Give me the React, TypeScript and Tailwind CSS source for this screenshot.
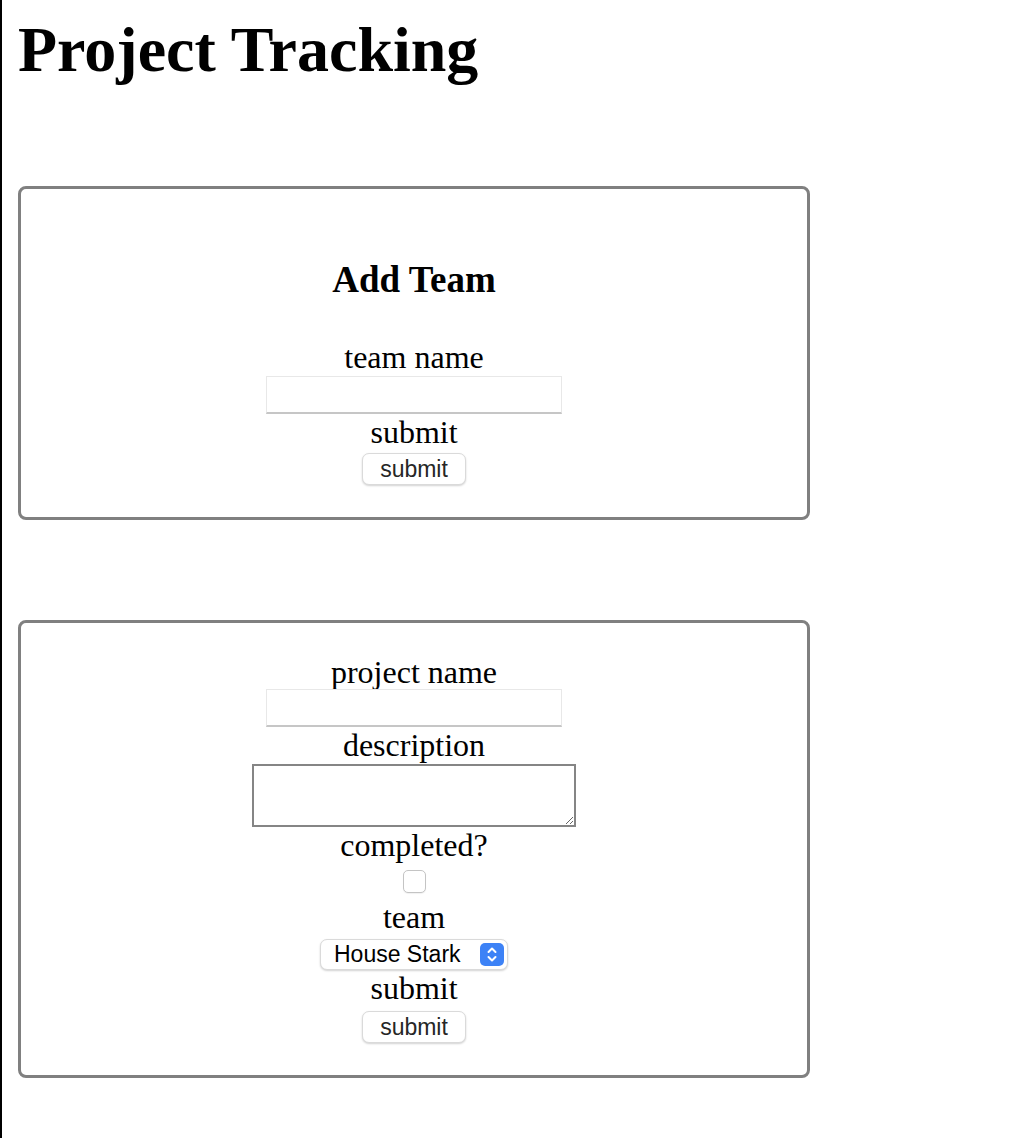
import React from "react";

const serif = { fontFamily: '"Liberation Serif", "Times New Roman", serif' };
const sans = { fontFamily: '"Liberation Sans", Arial, sans-serif' };

function Label({ children }: { children: React.ReactNode }) {
  return (
    <div className="text-[32px] leading-[normal] text-black text-center" style={serif}>
      {children}
    </div>
  );
}

function SubmitButton({ mt }: { mt: string }) {
  return (
    <button
      type="button"
      className={`${mt} w-[104px] h-[32px] rounded-[7px] bg-white border border-[#dadada] shadow-[0_1px_2px_rgba(0,0,0,0.18)] text-[23px] leading-none text-[#262626] flex items-center justify-center`}
      style={sans}
    >
      submit
    </button>
  );
}

function TextInput({ mt }: { mt: string }) {
  return (
    <input
      type="text"
      className={`${mt} w-[296px] h-[38px] bg-white border border-[#e8e8e8] border-b-2 border-b-[#c6c6c6] outline-none`}
    />
  );
}

export default function App() {
  return (
    <div className="min-h-[1138px] w-[1012px] bg-white border-l-2 border-black pl-4 pr-4 pt-[13px] pb-8">
      <h1 className="text-[64px] leading-[normal] font-bold text-black" style={serif}>
        Project Tracking
      </h1>

      <div className="mt-[99px] w-[792px] border-[3px] border-[#808080] rounded-[8px] flex flex-col items-center pt-8 pb-8">
        <h3 className="mt-[37px] text-[37px] leading-[normal] font-bold text-black" style={serif}>
          Add Team
        </h3>
        <div className="mt-[38px]">
          <Label>team name</Label>
        </div>
        <TextInput mt="mt-0" />
        <Label>submit</Label>
        <SubmitButton mt="mt-[2px]" />
      </div>

      <div className="mt-[100px] w-[792px] border-[3px] border-[#808080] rounded-[8px] flex flex-col items-center pt-[31px] pb-8">
        <Label>project name</Label>
        <TextInput mt="mt-[-2px]" />
        <Label>description</Label>
        <textarea
          className="mt-0 w-[324px] h-[63px] bg-white border-2 border-[#858585] outline-none"
        />
        <Label>completed?</Label>
        <div className="mt-[6px] mb-[6px] w-[23px] h-[23px] rounded-[5px] bg-white border border-[#c4c4c4] shadow-[0_1px_1px_rgba(0,0,0,0.06)]" />
        <Label>team</Label>
        <div className="mt-[3px] relative w-[188px] h-[31px] rounded-[7px] bg-white border border-[#dadada] shadow-[0_1px_2px_rgba(0,0,0,0.18)] flex items-center">
          <span className="pl-[13px] text-[23px] leading-none text-black" style={sans}>
            House Stark
          </span>
          <span className="absolute right-[3px] top-[3px] w-[24px] h-[23px] rounded-[5px] bg-[#3d82f6] flex items-center justify-center">
            <svg width="12" height="17" viewBox="0 0 12 17" fill="none">
              <path d="M2.5 6 L6 2.5 L9.5 6" stroke="white" strokeWidth="2" strokeLinecap="round" strokeLinejoin="round" />
              <path d="M2.5 11 L6 14.5 L9.5 11" stroke="white" strokeWidth="2" strokeLinecap="round" strokeLinejoin="round" />
            </svg>
          </span>
        </div>
        <Label>submit</Label>
        <SubmitButton mt="mt-[4px]" />
      </div>
    </div>
  );
}
